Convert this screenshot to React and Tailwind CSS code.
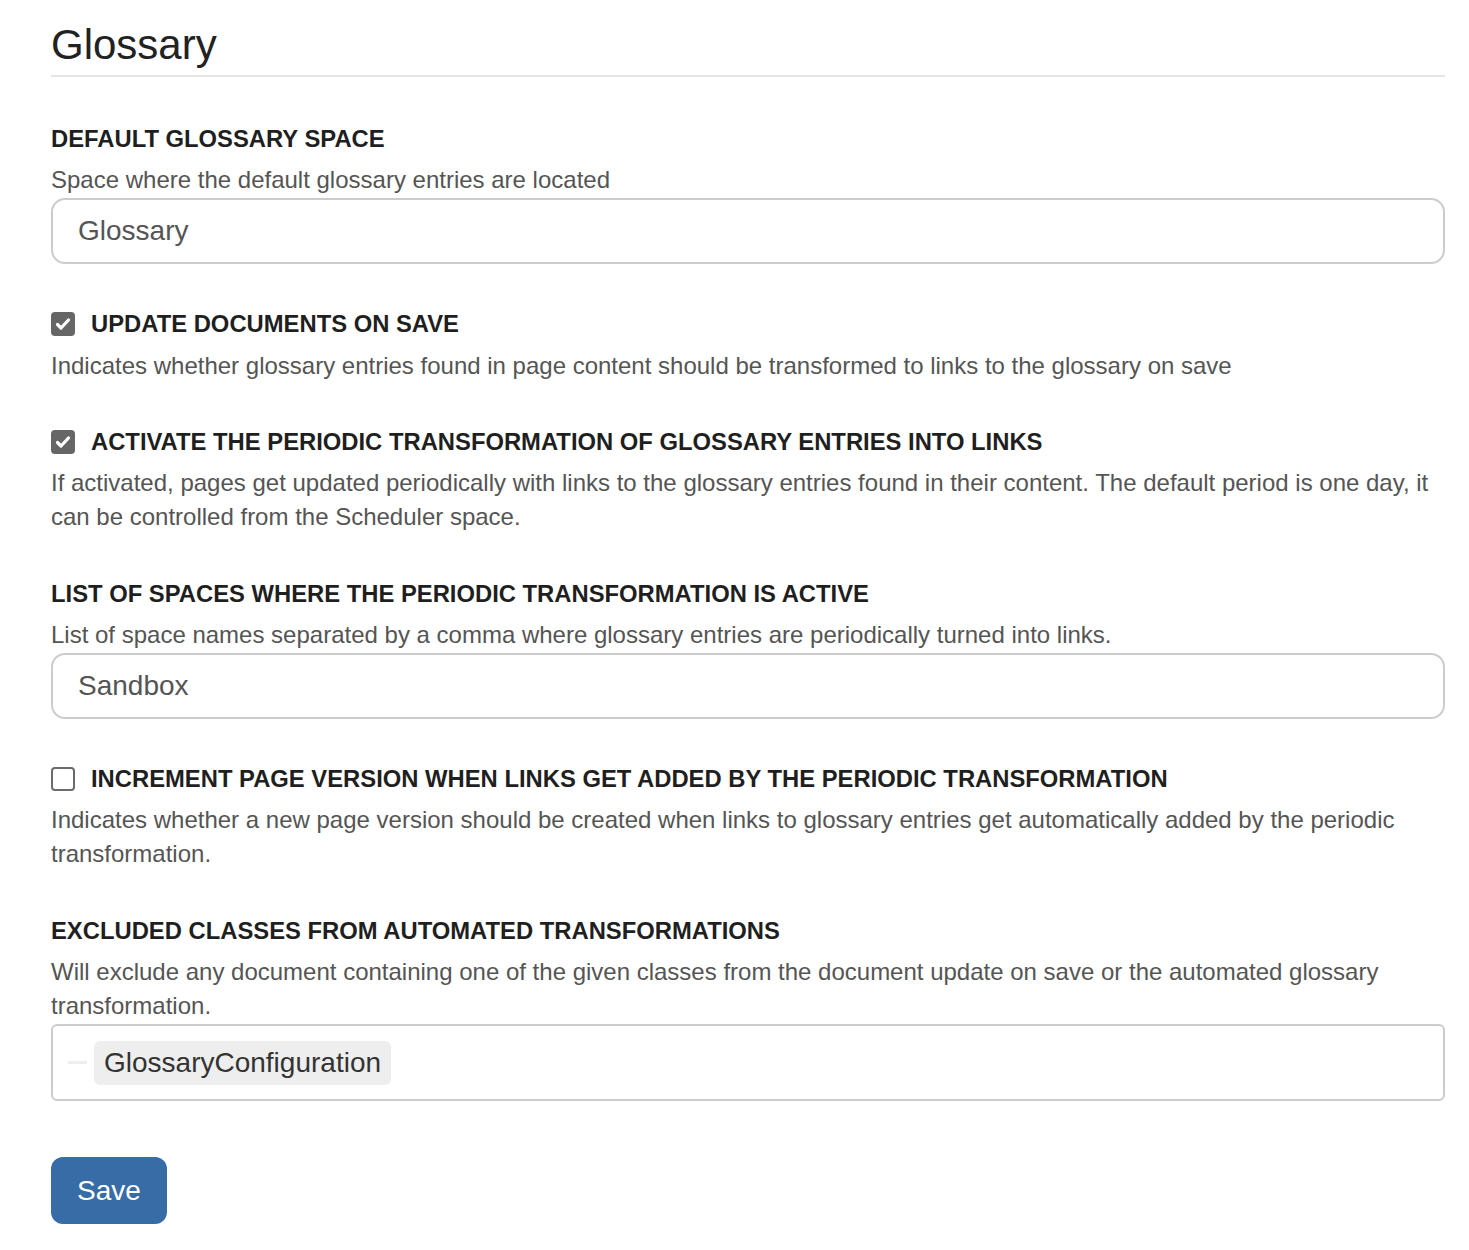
import { useState } from "react";

const font = { fontFamily: '"Liberation Sans", Arial, sans-serif' };

function Check({ checked, onChange }) {
  return (
    <button
      type="button"
      onClick={onChange}
      className={
        "w-[24px] h-[24px] rounded-[4px] flex items-center justify-center shrink-0 " +
        (checked ? "bg-[#666666]" : "bg-white border-2 border-[#6b6b6b]")
      }
    >
      {checked && (
        <svg width="18" height="18" viewBox="0 0 18 18" fill="none">
          <path d="M3.5 9.5l3.5 3.5 7.5-8" stroke="white" strokeWidth="3.2" strokeLinecap="round" strokeLinejoin="round" />
        </svg>
      )}
    </button>
  );
}

function Label({ children }) {
  return (
    <div className="text-[23.8px] leading-[34px] font-bold uppercase text-[#1f1f1f]">{children}</div>
  );
}

function Desc({ children }) {
  return <div className="text-[24px] leading-[34px] text-[#555555]">{children}</div>;
}

export default function App() {
  const [update, setUpdate] = useState(true);
  const [periodic, setPeriodic] = useState(true);
  const [increment, setIncrement] = useState(false);

  return (
    <div style={font} className="bg-white min-h-[1250px] pl-[51px] pr-[24px] pb-[26px]">
      <h1 className="pt-[22px] pb-[7px] text-[42px] leading-[46px] font-normal text-[#222222] border-b-2 border-[#e5e5e5]">
        Glossary
      </h1>

      <div className="mt-[45px]">
        <Label>Default glossary space</Label>
        <div className="mt-[7px]">
          <Desc>Space where the default glossary entries are located</Desc>
        </div>
        <input
          defaultValue="Glossary"
          className="mt-px w-full h-[66px] rounded-[14px] border-2 border-[#cccccc] px-[25px] text-[28px] text-[#555555] outline-none"
        />
      </div>

      <div className="mt-[43px]">
        <div className="flex items-center gap-[16px]">
          <Check checked={update} onChange={() => setUpdate(!update)} />
          <Label>Update documents on save</Label>
        </div>
        <div className="mt-[8px]">
          <Desc>
            Indicates whether glossary entries found in page content should be transformed to links to the glossary on save
          </Desc>
        </div>
      </div>

      <div className="mt-[42px]">
        <div className="flex items-center gap-[16px]">
          <Check checked={periodic} onChange={() => setPeriodic(!periodic)} />
          <Label>Activate the periodic transformation of glossary entries into links</Label>
        </div>
        <div className="mt-[7px]">
          <Desc>
            If activated, pages get updated periodically with links to the glossary entries found in their content. The default period is one day, it can be controlled from the Scheduler space.
          </Desc>
        </div>
      </div>

      <div className="mt-[43px]">
        <Label>List of spaces where the periodic transformation is active</Label>
        <div className="mt-[7px]">
          <Desc>List of space names separated by a comma where glossary entries are periodically turned into links.</Desc>
        </div>
        <input
          defaultValue="Sandbox"
          className="mt-px w-full h-[66px] rounded-[14px] border-2 border-[#cccccc] px-[25px] text-[28px] text-[#555555] outline-none"
        />
      </div>

      <div className="mt-[43px]">
        <div className="flex items-center gap-[16px]">
          <Check checked={increment} onChange={() => setIncrement(!increment)} />
          <Label>Increment page version when links get added by the periodic transformation</Label>
        </div>
        <div className="mt-[7px]">
          <Desc>
            Indicates whether a new page version should be created when links to glossary entries get automatically added by the periodic transformation.
          </Desc>
        </div>
      </div>

      <div className="mt-[43px]">
        <Label>Excluded classes from automated transformations</Label>
        <div className="mt-[7px]">
          <Desc>
            Will exclude any document containing one of the given classes from the document update on save or the automated glossary transformation.
          </Desc>
        </div>
        <div className="mt-px w-full h-[77px] rounded-[6px] border-2 border-[#cccccc] flex items-center pl-[15px]">
          <div className="w-[19px] h-[3px] bg-[#eeeeee] mr-[7px]" />
          <div className="bg-[#eeeeee] rounded-[6px] h-[44px] px-[10px] flex items-center text-[28px] text-[#333333]">
            GlossaryConfiguration
          </div>
        </div>
      </div>

      <button className="mt-[56px] h-[67px] w-[116px] rounded-[12px] bg-[#386ca6] text-white text-[28px] hover:bg-[#2f5d8f]">
        Save
      </button>
    </div>
  );
}
